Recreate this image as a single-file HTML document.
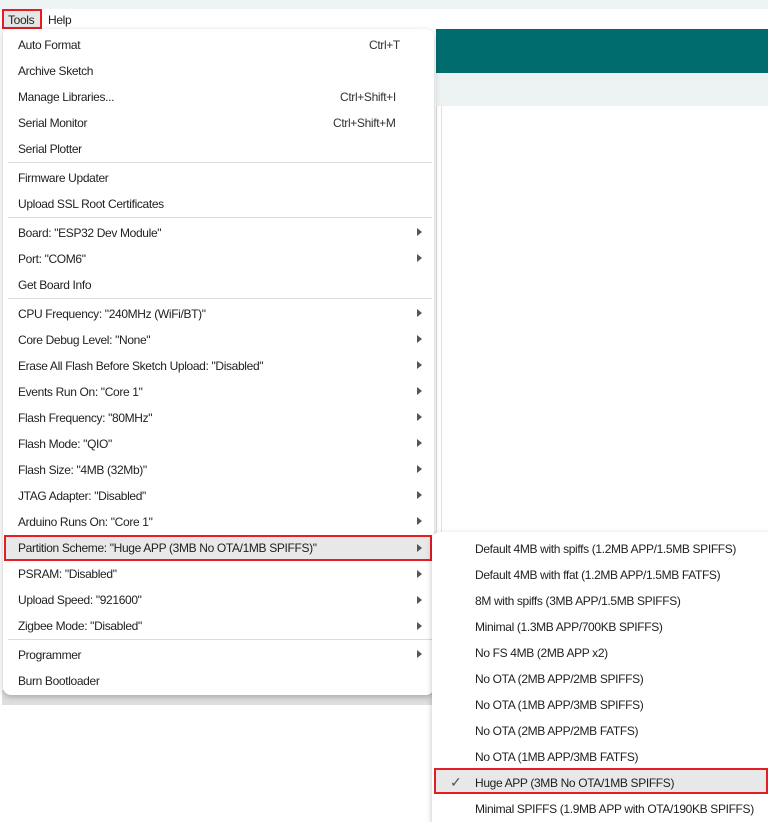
<!DOCTYPE html>
<html><head><style>
body{margin:0;width:768px;height:817px;overflow:hidden;background:#fff;font-family:"Liberation Sans",sans-serif;font-size:12px;letter-spacing:-0.35px;color:#1f1f1f;position:relative}
.a{position:absolute}
.it{position:absolute;left:18px;white-space:nowrap}
.sc{position:absolute;white-space:nowrap;color:#333}
.ar{position:absolute;left:417px;width:0;height:0;border-left:5px solid #555;border-top:4px solid transparent;border-bottom:4px solid transparent}
.sep{position:absolute;left:8px;width:424px;height:1px;background:#dcdcdc}
.si{position:absolute;left:475px;white-space:nowrap}
</style></head><body>
<div class="a" style="left:0;top:0;width:768px;height:9px;background:#eef4f4"></div>
<div class="a" style="left:436px;top:29px;width:332px;height:44px;background:#006c6e"></div>
<div class="a" style="left:436px;top:73px;width:332px;height:33px;background:#ecf1f1"></div>
<div class="a" style="left:436px;top:106px;width:1px;height:600px;background:#e0e0e0"></div>
<div class="a" style="left:441px;top:106px;width:1px;height:600px;background:#e0e0e0"></div>
<div class="a" style="left:2px;top:690px;width:430px;height:15px;background:#dedede"></div>
<div class="a" style="left:2px;top:9px;width:40px;height:20px;background:#e6e6e6;box-sizing:border-box;border:2px solid #e31e24"></div>
<div class="a" style="left:8px;top:13px">Tools</div>
<div class="a" style="left:48px;top:13px">Help</div>

<div class="a" style="left:3px;top:29px;width:431px;height:666px;background:#fff;border-radius:0 8px 8px 8px;box-shadow:0 2px 6px rgba(0,0,0,.25)"></div>
<div class="a" style="left:4px;top:535px;width:428px;height:26px;background:#e8e8e8;box-sizing:border-box;border:2px solid #e31e24"></div>

<div class="it" style="top:38px">Auto Format</div><div class="sc" style="top:38px;left:369px">Ctrl+T</div>
<div class="it" style="top:64px">Archive Sketch</div>
<div class="it" style="top:90px">Manage Libraries...</div><div class="sc" style="top:90px;left:340px">Ctrl+Shift+I</div>
<div class="it" style="top:116px">Serial Monitor</div><div class="sc" style="top:116px;left:333px">Ctrl+Shift+M</div>
<div class="it" style="top:142px">Serial Plotter</div>
<div class="sep" style="top:162px"></div>
<div class="it" style="top:171px">Firmware Updater</div>
<div class="it" style="top:197px">Upload SSL Root Certificates</div>
<div class="sep" style="top:217px"></div>
<div class="it" style="top:226px">Board: "ESP32 Dev Module"</div><div class="ar" style="top:228px"></div>
<div class="it" style="top:252px">Port: "COM6"</div><div class="ar" style="top:254px"></div>
<div class="it" style="top:278px">Get Board Info</div>
<div class="sep" style="top:298px"></div>
<div class="it" style="top:307px">CPU Frequency: "240MHz (WiFi/BT)"</div><div class="ar" style="top:309px"></div>
<div class="it" style="top:333px">Core Debug Level: "None"</div><div class="ar" style="top:335px"></div>
<div class="it" style="top:359px">Erase All Flash Before Sketch Upload: "Disabled"</div><div class="ar" style="top:361px"></div>
<div class="it" style="top:385px">Events Run On: "Core 1"</div><div class="ar" style="top:387px"></div>
<div class="it" style="top:411px">Flash Frequency: "80MHz"</div><div class="ar" style="top:413px"></div>
<div class="it" style="top:437px">Flash Mode: "QIO"</div><div class="ar" style="top:439px"></div>
<div class="it" style="top:463px">Flash Size: "4MB (32Mb)"</div><div class="ar" style="top:465px"></div>
<div class="it" style="top:489px">JTAG Adapter: "Disabled"</div><div class="ar" style="top:491px"></div>
<div class="it" style="top:515px">Arduino Runs On: "Core 1"</div><div class="ar" style="top:517px"></div>
<div class="it" style="top:541px">Partition Scheme: "Huge APP (3MB No OTA/1MB SPIFFS)"</div><div class="ar" style="top:544px"></div>
<div class="it" style="top:567px">PSRAM: "Disabled"</div><div class="ar" style="top:570px"></div>
<div class="it" style="top:593px">Upload Speed: "921600"</div><div class="ar" style="top:596px"></div>
<div class="it" style="top:619px">Zigbee Mode: "Disabled"</div><div class="ar" style="top:622px"></div>
<div class="sep" style="top:639px"></div>
<div class="it" style="top:648px">Programmer</div><div class="ar" style="top:650px"></div>
<div class="it" style="top:674px">Burn Bootloader</div>

<div class="a" style="left:432px;top:532px;width:340px;height:290px;background:#fff;border-radius:8px 0 0 0;box-shadow:0 2px 6px rgba(0,0,0,.25)"></div>
<div class="a" style="left:434px;top:768px;width:334px;height:26px;background:#e8e8e8;box-sizing:border-box;border:2px solid #e31e24"></div>
<div class="si" style="top:542px">Default 4MB with spiffs (1.2MB APP/1.5MB SPIFFS)</div>
<div class="si" style="top:568px">Default 4MB with ffat (1.2MB APP/1.5MB FATFS)</div>
<div class="si" style="top:594px">8M with spiffs (3MB APP/1.5MB SPIFFS)</div>
<div class="si" style="top:620px">Minimal (1.3MB APP/700KB SPIFFS)</div>
<div class="si" style="top:646px">No FS 4MB (2MB APP x2)</div>
<div class="si" style="top:672px">No OTA (2MB APP/2MB SPIFFS)</div>
<div class="si" style="top:698px">No OTA (1MB APP/3MB SPIFFS)</div>
<div class="si" style="top:724px">No OTA (2MB APP/2MB FATFS)</div>
<div class="si" style="top:750px">No OTA (1MB APP/3MB FATFS)</div>
<div class="a" style="left:450px;top:774px;color:#555;font-size:14px">✓</div>
<div class="si" style="top:776px">Huge APP (3MB No OTA/1MB SPIFFS)</div>
<div class="si" style="top:802px">Minimal SPIFFS (1.9MB APP with OTA/190KB SPIFFS)</div>
</body></html>
